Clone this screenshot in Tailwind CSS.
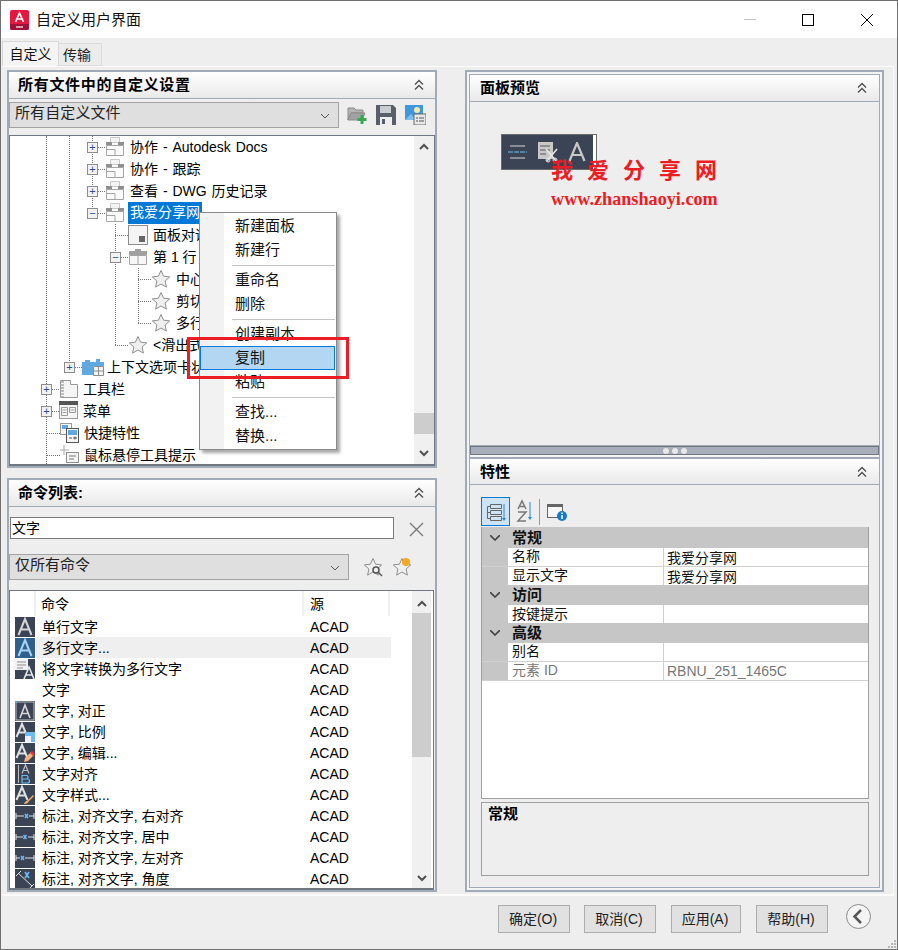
<!DOCTYPE html>
<html lang="zh-CN">
<head>
  <meta charset="UTF-8" />
  <title>自定义用户界面</title>
  <script src="https://cdn.jsdelivr.net/npm/@tailwindcss/browser@4"></script>
</head>
<body class="bg-[#eeeeee] text-black text-[14px] leading-[20px] font-[family-name:'Liberation_Sans','Noto_Sans_CJK_SC',sans-serif]">

  <!-- shared icons -->
  <svg class="hidden">
    <symbol id="panel" viewBox="0 0 20 22">
      <path d="M5.500 1.500h9v5h-9z" fill="#f4f4f4" stroke="#c8c8c8"/>
      <path d="M1 6h6v3H1zM13 6h6v3h-6z" fill="#909090"/>
      <path d="M1.500 9.500h17v10h-17z M10 13.500v6 M1.500 13.500h8.500" fill="#fbfbfb" stroke="#a4a4a4"/>
    </symbol>
    <symbol id="row" viewBox="0 0 20 20">
      <path d="M1 4h6v-2h6v2h6v4h-18z" fill="#a0a0a0"/>
      <path d="M1.500 8.500h17v9h-17z M10 8.500v9" fill="#f7f7f7" stroke="#a4a4a4"/>
    </symbol>
    <symbol id="star" viewBox="0 0 20 20">
      <path d="M10 1.500l2.600 5.700 6.100.7-4.600 4.100 1.300 6.100-5.400-3.100-5.400 3.100 1.300-6.100-4.600-4.100 6.100-.7z" fill="#efefef" stroke="#8f8f8f"/>
    </symbol>
    <symbol id="chev2" viewBox="0 0 12 12">
      <path d="M2 5.500l4-4 4 4M2 10.500l4-4 4 4" fill="none" stroke="#505050" stroke-width="1.400"/>
    </symbol>
    <symbol id="a" viewBox="0 0 20 20">
      <rect width="20" height="20" fill="#3b4455"/>
      <path d="M3.500 18L10 2l6.500 16M6 12.500h8" fill="none" stroke="#d6d6d6" stroke-width="2"/>
    </symbol>
    <symbol id="a-blue" viewBox="0 0 20 20">
      <rect width="20" height="20" fill="#2f5f8c"/>
      <path d="M3.500 18L10 2l6.500 16M6 12.500h8" fill="none" stroke="#a9d3f2" stroke-width="2"/>
    </symbol>
    <symbol id="a-conv" viewBox="0 0 20 20">
      <rect y="11" width="20" height="9" fill="#3b4455"/>
      <rect width="13" height="11" fill="#f2f2f2"/>
      <path d="M2 3h9M2 6h9M2 9h6" stroke="#8c8c8c"/>
      <rect x="13" width="7" height="11" fill="#3b4455"/>
      <path d="M9 20l5-12 5 12M11 16h6" fill="none" stroke="#e6e6e6" stroke-width="1.600"/>
    </symbol>
    <symbol id="a-just" viewBox="0 0 20 20">
      <rect width="20" height="20" fill="#3b4455"/>
      <rect x="1" y="1" width="18" height="18" fill="none" stroke="#bdbdbd"/>
      <path d="M5 17L10 4l5 13M7 12.500h6" fill="none" stroke="#d6d6d6" stroke-width="1.600"/>
      <rect width="2" height="2" fill="#5aa9e6"/>
    </symbol>
    <symbol id="a-scale" viewBox="0 0 20 20">
      <rect width="20" height="20" fill="#3b4455"/>
      <path d="M1.500 15L7 2l5.500 13M3.500 10.500h7" fill="none" stroke="#e0e0e0" stroke-width="2"/>
      <rect x="10" y="10" width="10" height="10" fill="#6cbcf5"/>
      <rect x="10" y="14" width="6" height="6" fill="#f0f0f0"/>
    </symbol>
    <symbol id="a-edit" viewBox="0 0 20 20">
      <rect width="20" height="20" fill="#3b4455"/>
      <path d="M1.500 15L7 2l5.500 13M3.500 10.500h7" fill="none" stroke="#e0e0e0" stroke-width="2"/>
      <path d="M9 19l1-4 6-6 3 3-6 6z" fill="#f5b183"/>
      <path d="M15 10l2-2 3 3-2 2z" fill="#e8343a"/>
    </symbol>
    <symbol id="a-align" viewBox="0 0 20 20">
      <rect width="20" height="20" fill="#3b4455"/>
      <path d="M3.500 1v18" stroke="#bdbdbd"/>
      <path d="M7 9.500L10.500 1 14 9.500M8.500 6.500h4" fill="none" stroke="#bdbdbd" stroke-width="1.200"/>
      <path d="M7 11.500h5a2 2 0 010 3.500h-5zM7 15h5.500a2 2 0 010 4H7z" fill="none" stroke="#6cbcf5" stroke-width="1.200"/>
    </symbol>
    <symbol id="a-style" viewBox="0 0 20 20">
      <rect width="20" height="20" fill="#3b4455"/>
      <path d="M1.500 15L7 2l5.500 13M3.500 10.500h7" fill="none" stroke="#e0e0e0" stroke-width="2"/>
      <path d="M9 19c1-3 3-3 4-4l5-5 1 1-5 5c-1 2-2 3-5 3z" fill="#f0b070"/>
    </symbol>
    <symbol id="dim-r" viewBox="0 0 20 20">
      <rect width="20" height="20" fill="#3b4455"/>
      <path d="M1 7v6M19 7v6M1 10h8M14 10h5" stroke="#e0e0e0"/>
      <path d="M10 8l3 4M13 8l-3 4" stroke="#6cbcf5" stroke-width="1.400"/>
    </symbol>
    <symbol id="dim-c" viewBox="0 0 20 20">
      <rect width="20" height="20" fill="#3b4455"/>
      <path d="M1 7v6M19 7v6M1 10h7M13 10h6" stroke="#e0e0e0"/>
      <path d="M8.500 8l3 4M11.500 8l-3 4" stroke="#6cbcf5" stroke-width="1.400"/>
    </symbol>
    <symbol id="dim-l" viewBox="0 0 20 20">
      <rect width="20" height="20" fill="#3b4455"/>
      <path d="M1 7v6M19 7v6M1 10h4M10 10h9" stroke="#e0e0e0"/>
      <path d="M6 8l3 4M9 8l-3 4" stroke="#6cbcf5" stroke-width="1.400"/>
    </symbol>
    <symbol id="dim-a" viewBox="0 0 20 20">
      <rect width="20" height="20" fill="#3b4455"/>
      <path d="M1 7l5-5M15 19l4-4M3 4l14 13" stroke="#e0e0e0"/>
      <path d="M10 3l4 6M14 3l-4 6" stroke="#6cbcf5" stroke-width="1.600"/>
    </symbol>
  </svg>

  <div class="h-[950px] flex flex-col border border-[#707070] overflow-hidden">

    <!-- title bar -->
    <div class="h-[37px] shrink-0 bg-white flex items-center">
      <svg class="ml-[9px] w-5 h-5" viewBox="0 0 20 20">
        <rect width="19" height="20" rx="2" fill="#e5173f"/>
        <path d="M0 14h19v4a2 2 0 01-2 2H2a2 2 0 01-2-2z" fill="#9c1137"/>
        <path d="M5.500 12L9.500 3l4 9M7 9h5" fill="none" stroke="#fff" stroke-width="1.700"/>
        <path d="M6 17h7" stroke="#f5c9d4" stroke-width="1.500"/>
      </svg>
      <div class="ml-[6px] text-[15px] text-[#111]">自定义用户界面</div>
      <div class="ml-auto flex items-center">
        <div class="w-[12px] h-px bg-[#c4c4c4] mr-[46px]"></div>
        <div class="w-[12px] h-[12px] border border-black mr-[47px]"></div>
        <svg class="w-[12px] h-[12px] mr-[24px]" viewBox="0 0 12 12"><path d="M0 0l12 12M12 0L0 12" stroke="#000"/></svg>
      </div>
    </div>

    <!-- tabs -->
    <div class="h-[28px] shrink-0 flex items-end pl-[1px] relative z-10">
      <div class="w-[57px] h-[25px] bg-[#f4f4f4] border border-b-0 border-[#d8d8d8] flex items-center justify-center text-[#111]">自定义</div>
      <div class="w-[43px] h-[23px] bg-[#ececec] border border-l-0 border-[#dcdcdc] flex items-center pl-[4px] text-[#222]">传输</div>
    </div>

    <!-- tab page -->
    <div class="h-[830px] shrink-0 mx-[1px] mr-[3px] border-t border-b-2 border-r border-[#fbfbfb] flex">

      <!-- left column -->
      <div class="w-[430px] ml-[5px] pt-[3px] flex flex-col gap-[10px] shrink-0">

        <!-- customizations in all files -->
        <div class="h-[398px] border-[2px] border-[#a0abb7] flex flex-col">
          <div class="h-[27px] shrink-0 bg-linear-to-b from-white to-[#e9e9e9] border-b border-[#a0abb7] flex items-center justify-between pl-[9px] pr-[10px]">
            <div class="font-bold text-[15px] tracking-[0.7px]">所有文件中的自定义设置</div>
            <svg class="w-3 h-3"><use href="#chev2"/></svg>
          </div>
          <div class="h-[36px] shrink-0 flex items-center pb-[4px]">
            <div class="w-[330px] h-[26px] bg-[#dfdfdf] border border-[#a3a3a3] flex items-start justify-between pl-[5px] pr-[8px] text-[15px] leading-[19px] text-[#222]">
              <span class="tracking-[0.1px]">所有自定义文件</span>
              <svg class="w-[10px] h-[6px] mt-[10px]" viewBox="0 0 10 6"><path d="M1 1l4 4 4-4" fill="none" stroke="#555"/></svg>
            </div>
            <svg class="ml-[8px] w-5 h-5" viewBox="0 0 20 20">
              <path d="M1 3h6l2 2h7v3H4L1 15z" fill="#b5b5b5" stroke="#8a8a8a"/>
              <path d="M4 8h14l-3 7H1z" fill="#a2a2a2" stroke="#8a8a8a"/>
              <path d="M15 10v9M10.500 14.500h9" stroke="#36a852" stroke-width="3"/>
            </svg>
            <svg class="ml-[9px] w-5 h-5" viewBox="0 0 20 20">
              <path d="M0 0h17l3 3v17H0z" fill="#585f69"/>
              <rect x="4" y="1" width="11" height="7" fill="#c9ccd0"/>
              <rect x="4" y="12" width="12" height="8" fill="#eeeeee"/>
              <rect x="6" y="14" width="3" height="5" fill="#585f69"/>
            </svg>
            <svg class="ml-[9px] w-[21px] h-5" viewBox="0 0 21 20">
              <rect width="18" height="15" fill="#3f97de"/>
              <circle cx="12" cy="5" r="3" fill="#f4e9a8"/>
              <path d="M0 15l6-6 5 6z" fill="#7cc0ef"/>
              <rect x="9" y="9" width="12" height="11" fill="#e8e8e8" stroke="#6a6a6a"/>
              <path d="M11 13h2M14 13h5M11 16h2M14 16h5" stroke="#555"/>
            </svg>
          </div>

          <!-- tree -->
          <div class="relative flex-1 min-h-0 bg-white border border-[#6e7782] border-b-2 overflow-hidden">
            <div class="absolute left-[36px] top-0 bottom-0 border-l border-dotted border-[#777]"></div>
            <div class="absolute left-[59px] top-0 h-[231px] border-l border-dotted border-[#777]"></div>
            <div class="absolute left-[82px] top-0 h-[77px] border-l border-dotted border-[#777]"></div>
            <div class="absolute left-[105px] top-[88px] h-[121px] border-l border-dotted border-[#777]"></div>
            <div class="absolute left-[128px] top-[132px] h-[55px] border-l border-dotted border-[#777]"></div>

            <div class="flex h-[22px] items-center pl-[77px]">
              <span class="w-[11px] h-[11px] bg-[#f2f2f2] border border-[#8d8d8d] flex items-center justify-center text-[#2b4f95] text-[11px] leading-none relative">+</span>
              <span class="w-[7px] border-t border-dotted border-[#777]"></span>
              <svg class="w-5 h-[22px]"><use href="#panel"/></svg>
              <span class="ml-[5px] [word-spacing:1px]">协作 - Autodesk Docs</span>
            </div>
            <div class="flex h-[22px] items-center pl-[77px]">
              <span class="w-[11px] h-[11px] bg-[#f2f2f2] border border-[#8d8d8d] flex items-center justify-center text-[#2b4f95] text-[11px] leading-none relative">+</span>
              <span class="w-[7px] border-t border-dotted border-[#777]"></span>
              <svg class="w-5 h-[22px]"><use href="#panel"/></svg>
              <span class="ml-[5px] [word-spacing:1px]">协作 - 跟踪</span>
            </div>
            <div class="flex h-[22px] items-center pl-[77px]">
              <span class="w-[11px] h-[11px] bg-[#f2f2f2] border border-[#8d8d8d] flex items-center justify-center text-[#2b4f95] text-[11px] leading-none relative">+</span>
              <span class="w-[7px] border-t border-dotted border-[#777]"></span>
              <svg class="w-5 h-[22px]"><use href="#panel"/></svg>
              <span class="ml-[5px] [word-spacing:1px]">查看 - DWG 历史记录</span>
            </div>
            <div class="flex h-[22px] items-center pl-[77px]">
              <span class="w-[11px] h-[11px] bg-[#f2f2f2] border border-[#8d8d8d] flex items-center justify-center text-[#2b4f95] text-[11px] leading-none relative">−</span>
              <span class="w-[7px] border-t border-dotted border-[#777]"></span>
              <svg class="w-5 h-[22px]"><use href="#panel"/></svg>
              <span class="ml-[3px] px-[2px] h-[22px] bg-[#0078d7] text-white">我爱分享网</span>
            </div>
            <div class="flex h-[22px] items-center pl-[105px]">
              <span class="w-[13px] border-t border-dotted border-[#777]"></span>
              <span class="w-5 h-5 bg-[#f4f4f4] border border-[#8d8d8d] flex items-end justify-end"><span class="w-[6px] h-[6px] mb-[2px] mr-[2px] bg-[#666]"></span></span>
              <span class="ml-[5px]">面板对话框</span>
            </div>
            <div class="flex h-[22px] items-center pl-[100px]">
              <span class="w-[11px] h-[11px] bg-[#f2f2f2] border border-[#8d8d8d] flex items-center justify-center text-[#2b4f95] text-[11px] leading-none relative">−</span>
              <span class="w-[7px] border-t border-dotted border-[#777]"></span>
              <svg class="w-5 h-5"><use href="#row"/></svg>
              <span class="ml-[5px]">第 1 行</span>
            </div>
            <div class="flex h-[22px] items-center pl-[128px]">
              <span class="w-[13px] border-t border-dotted border-[#777]"></span>
              <svg class="w-5 h-5"><use href="#star"/></svg>
              <span class="ml-[5px]">中心线</span>
            </div>
            <div class="flex h-[22px] items-center pl-[128px]">
              <span class="w-[13px] border-t border-dotted border-[#777]"></span>
              <svg class="w-5 h-5"><use href="#star"/></svg>
              <span class="ml-[5px]">剪切</span>
            </div>
            <div class="flex h-[22px] items-center pl-[128px]">
              <span class="w-[13px] border-t border-dotted border-[#777]"></span>
              <svg class="w-5 h-5"><use href="#star"/></svg>
              <span class="ml-[5px]">多行文字</span>
            </div>
            <div class="flex h-[22px] items-center pl-[105px]">
              <span class="w-[13px] border-t border-dotted border-[#777]"></span>
              <svg class="w-5 h-5"><use href="#star"/></svg>
              <span class="ml-[5px]">&lt;滑出式面板&gt;</span>
            </div>
            <div class="flex h-[22px] items-center pl-[54px]">
              <span class="w-[11px] h-[11px] bg-[#f2f2f2] border border-[#8d8d8d] flex items-center justify-center text-[#2b4f95] text-[11px] leading-none relative">+</span>
              <span class="w-[7px] border-t border-dotted border-[#777]"></span>
              <svg class="w-[22px] h-5" viewBox="0 0 22 20">
                <path d="M0 5h3V3h5v2h3v13H0z" fill="#5fa8e0"/>
                <path d="M11 5h3V2h4v3h4v4H11z" fill="#5fa8e0"/>
                <path d="M11.500 9.500h10v9h-10zM16.500 9.500v9M11.500 14h10" fill="#f4f4f4" stroke="#8d8d8d"/>
              </svg>
              <span class="ml-[3px]">上下文选项卡状态</span>
            </div>
            <div class="flex h-[22px] items-center pl-[31px]">
              <span class="w-[11px] h-[11px] bg-[#f2f2f2] border border-[#8d8d8d] flex items-center justify-center text-[#2b4f95] text-[11px] leading-none relative">+</span>
              <span class="w-[7px] border-t border-dotted border-[#777]"></span>
              <svg class="w-[19px] h-5" viewBox="0 0 19 20">
                <path d="M1.500 1.500h10v4h7v13H1.500z" fill="#f5f5f5" stroke="#9a9a9a"/>
                <path d="M3.500 2v16" stroke="#bdbdbd" stroke-width="3" stroke-dasharray="2 1"/>
              </svg>
              <span class="ml-[5px]">工具栏</span>
            </div>
            <div class="flex h-[22px] items-center pl-[31px]">
              <span class="w-[11px] h-[11px] bg-[#f2f2f2] border border-[#8d8d8d] flex items-center justify-center text-[#2b4f95] text-[11px] leading-none relative">+</span>
              <span class="w-[7px] border-t border-dotted border-[#777]"></span>
              <svg class="w-[19px] h-5" viewBox="0 0 19 20">
                <rect x="0.500" y="0.500" width="18" height="17" fill="#f5f5f5" stroke="#9a9a9a"/>
                <rect width="19" height="4" fill="#555"/>
                <path d="M2.500 6.500h6v8h-6zM10.500 6.500h6v5h-6zM3.500 9h4M3.500 11.500h4M11.500 9h4" fill="none" stroke="#9a9a9a"/>
              </svg>
              <span class="ml-[5px]">菜单</span>
            </div>
            <div class="flex h-[22px] items-center pl-[37px]">
              <span class="w-[13px] border-t border-dotted border-[#777]"></span>
              <svg class="w-[19px] h-5" viewBox="0 0 19 20">
                <rect x="0.500" y="0.500" width="11" height="11" fill="#f5f5f5" stroke="#9a9a9a"/>
                <rect x="2" y="2" width="6" height="4" fill="#5fa8e0"/>
                <rect x="6.500" y="5.500" width="12" height="14" fill="#f5f5f5" stroke="#555"/>
                <rect x="8" y="7" width="9" height="5" fill="#5fa8e0"/>
                <path d="M9 15h3M13 15h4M15 13.500v3" stroke="#555"/>
              </svg>
              <span class="ml-[5px]">快捷特性</span>
            </div>
            <div class="flex h-[22px] items-center pl-[37px]">
              <span class="w-[13px] border-t border-dotted border-[#777]"></span>
              <svg class="w-[19px] h-5" viewBox="0 0 19 20">
                <path d="M4 0v10M0 5h9" stroke="#aaa"/>
                <rect x="6.500" y="7.500" width="12" height="10" fill="#f5f5f5" stroke="#8d8d8d"/>
                <path d="M9 11h7M9 14h5" stroke="#777"/>
              </svg>
              <span class="ml-[5px]">鼠标悬停工具提示</span>
            </div>

            <!-- tree scrollbar -->
            <div class="absolute right-0 top-0 bottom-0 w-[20px] bg-[#f0f0f0] flex flex-col items-center">
              <svg class="w-[10px] h-[7px] mt-[7px]" viewBox="0 0 10 7"><path d="M1 6l4-4 4 4" fill="none" stroke="#505050" stroke-width="2"/></svg>
              <div class="w-full h-[21px] mt-[263px] bg-[#cdcdcd]"></div>
              <svg class="w-[10px] h-[7px] mt-[16px]" viewBox="0 0 10 7"><path d="M1 1l4 4 4-4" fill="none" stroke="#505050" stroke-width="2"/></svg>
            </div>
          </div>
        </div>

        <!-- command list -->
        <div class="h-[414px] border-[2px] border-[#a0abb7] flex flex-col">
          <div class="h-[27px] shrink-0 bg-linear-to-b from-white to-[#e9e9e9] border-b border-[#a0abb7] flex items-center justify-between pl-[9px] pr-[10px]">
            <div class="font-bold text-[15px]">命令列表:</div>
            <svg class="w-3 h-3"><use href="#chev2"/></svg>
          </div>
          <div class="h-[32px] shrink-0 flex items-end">
            <div class="ml-[1px] w-[384px] h-[22px] bg-white border border-[#7a7a7a] pl-[1px] leading-[20px]">文字</div>
            <svg class="ml-[15px] mb-[2px] w-[15px] h-[15px]" viewBox="0 0 15 15"><path d="M1 1l13 13M14 1L1 14" stroke="#777" stroke-width="1.300"/></svg>
          </div>
          <div class="h-[36px] shrink-0 flex items-center mt-[10px] mb-[5px]">
            <div class="w-[340px] h-[26px] bg-[#dfdfdf] border border-[#a3a3a3] flex items-start justify-between pl-[5px] pr-[8px] text-[15px] leading-[19px] text-[#222]">
              <span>仅所有命令</span>
              <svg class="w-[10px] h-[6px] mt-[10px]" viewBox="0 0 10 6"><path d="M1 1l4 4 4-4" fill="none" stroke="#555"/></svg>
            </div>
            <svg class="ml-[14px] w-5 h-5" viewBox="0 0 20 20">
              <path d="M10 1.500l2.600 5.700 6.100.7-4.600 4.100 1.300 6.100-5.400-3.100-5.400 3.100 1.300-6.100-4.600-4.100 6.100-.7z" fill="#efefef" stroke="#8f8f8f"/>
              <circle cx="13" cy="13" r="3" fill="#efefef" stroke="#555" stroke-width="1.500"/>
              <path d="M15 15l4 4" stroke="#555" stroke-width="1.500"/>
            </svg>
            <svg class="ml-[9px] w-5 h-5" viewBox="0 0 20 20">
              <path d="M10 1.500l2.600 5.700 6.100.7-4.600 4.100 1.300 6.100-5.400-3.100-5.400 3.100 1.300-6.100-4.600-4.100 6.100-.7z" fill="#efefef" stroke="#8f8f8f"/>
              <circle cx="14" cy="5" r="4" fill="#f6a821"/>
            </svg>
          </div>

          <!-- command table -->
          <div class="relative flex-1 min-h-0 mr-[1px] bg-white border border-[#6e7782] border-b-2 overflow-hidden">
            <div class="h-[25px] flex leading-[26px]">
              <div class="w-[26px] border-r-2 border-[#f0f0f0] h-[25px]"></div>
              <div class="w-[268px] pl-[5px] border-r-2 border-[#f0f0f0] h-[25px]">命令</div>
              <div class="w-[86px] pl-[6px] border-r-2 border-[#f0f0f0] h-[25px]">源</div>
            </div>
            <div class="w-[381px] h-[21px] flex items-center"><svg class="ml-[5px] w-5 h-5"><use href="#a"/></svg><span class="ml-[7px] w-[268px]">单行文字</span><span>ACAD</span></div>
            <div class="w-[381px] h-[21px] flex items-center bg-linear-to-r from-white from-[26px] to-[#efefef] to-[26px]"><svg class="ml-[5px] w-5 h-5"><use href="#a-blue"/></svg><span class="ml-[7px] w-[268px]">多行文字...</span><span>ACAD</span></div>
            <div class="w-[381px] h-[21px] flex items-center"><svg class="ml-[5px] w-5 h-5"><use href="#a-conv"/></svg><span class="ml-[7px] w-[268px]">将文字转换为多行文字</span><span>ACAD</span></div>
            <div class="w-[381px] h-[21px] flex items-center"><span class="ml-[32px] w-[268px]">文字</span><span>ACAD</span></div>
            <div class="w-[381px] h-[21px] flex items-center"><svg class="ml-[5px] w-5 h-5"><use href="#a-just"/></svg><span class="ml-[7px] w-[268px]">文字, 对正</span><span>ACAD</span></div>
            <div class="w-[381px] h-[21px] flex items-center"><svg class="ml-[5px] w-5 h-5"><use href="#a-scale"/></svg><span class="ml-[7px] w-[268px]">文字, 比例</span><span>ACAD</span></div>
            <div class="w-[381px] h-[21px] flex items-center"><svg class="ml-[5px] w-5 h-5"><use href="#a-edit"/></svg><span class="ml-[7px] w-[268px]">文字, 编辑...</span><span>ACAD</span></div>
            <div class="w-[381px] h-[21px] flex items-center"><svg class="ml-[5px] w-5 h-5"><use href="#a-align"/></svg><span class="ml-[7px] w-[268px]">文字对齐</span><span>ACAD</span></div>
            <div class="w-[381px] h-[21px] flex items-center"><svg class="ml-[5px] w-5 h-5"><use href="#a-style"/></svg><span class="ml-[7px] w-[268px]">文字样式...</span><span>ACAD</span></div>
            <div class="w-[381px] h-[21px] flex items-center"><svg class="ml-[5px] w-5 h-5"><use href="#dim-r"/></svg><span class="ml-[7px] w-[268px]">标注, 对齐文字, 右对齐</span><span>ACAD</span></div>
            <div class="w-[381px] h-[21px] flex items-center"><svg class="ml-[5px] w-5 h-5"><use href="#dim-c"/></svg><span class="ml-[7px] w-[268px]">标注, 对齐文字, 居中</span><span>ACAD</span></div>
            <div class="w-[381px] h-[21px] flex items-center"><svg class="ml-[5px] w-5 h-5"><use href="#dim-l"/></svg><span class="ml-[7px] w-[268px]">标注, 对齐文字, 左对齐</span><span>ACAD</span></div>
            <div class="w-[381px] h-[21px] flex items-center"><svg class="ml-[5px] w-5 h-5"><use href="#dim-a"/></svg><span class="ml-[7px] w-[268px]">标注, 对齐文字, 角度</span><span>ACAD</span></div>

            <!-- list scrollbar -->
            <div class="absolute right-[2px] top-0 bottom-0 w-[19px] bg-[#f0f0f0] flex flex-col items-center">
              <svg class="w-[10px] h-[7px] mt-[9px]" viewBox="0 0 10 7"><path d="M1 6l4-4 4 4" fill="none" stroke="#505050" stroke-width="2"/></svg>
              <div class="w-full h-[144px] mt-[6px] bg-[#cdcdcd]"></div>
              <svg class="w-[10px] h-[7px] mt-[118px]" viewBox="0 0 10 7"><path d="M1 1l4 4 4-4" fill="none" stroke="#505050" stroke-width="2"/></svg>
            </div>
          </div>
        </div>
      </div>

      <!-- right column -->
      <div class="w-[419px] h-[822px] ml-[28px] mt-[3px] shrink-0 border-[2px] border-[#a0abb7] bg-[#f4f4f4] p-[2px] flex flex-col">
        <div class="flex-1 min-h-0 border border-[#a0abb7] flex flex-col">

          <!-- panel preview -->
          <div class="h-[371px] shrink-0 flex flex-col relative">
            <div class="h-[27px] shrink-0 bg-linear-to-b from-white to-[#e9e9e9] border-b border-[#a0abb7] flex items-center justify-between pl-[10px] pr-[11px]">
              <div class="font-bold text-[15px]">面板预览</div>
              <svg class="w-3 h-3"><use href="#chev2"/></svg>
            </div>
            <div class="flex-1 bg-[#eeeeee] border-b border-[#a0abb7] pl-[31px] pt-[32px]">
              <div class="w-[96px] h-[36px] border border-[#6a6a6a] bg-[#3b4455] flex items-center">
                <svg class="ml-[5px] w-5 h-5" viewBox="0 0 20 20">
                  <path d="M3 4h15M3 16h15" stroke="#d8d8d8"/>
                  <path d="M1 10h19" stroke="#6cbcf5" stroke-dasharray="5 1"/>
                </svg>
                <svg class="ml-[10px] w-[22px] h-[22px]" viewBox="0 0 22 22">
                  <rect x="1" y="1" width="15" height="17" fill="#c8c8c8"/>
                  <path d="M3 5h10M3 9h10M3 13h6" stroke="#555"/>
                  <path d="M9 8l10 12M20 8L10 20" stroke="#e8e8e8" stroke-width="1.500"/>
                  <circle cx="11" cy="19" r="2" fill="none" stroke="#e8e8e8"/>
                  <circle cx="18" cy="19" r="2" fill="none" stroke="#e8e8e8"/>
                </svg>
                <svg class="ml-[9px] w-[18px] h-[20px]" viewBox="0 0 18 20"><path d="M1.500 19L9 1l7.500 18M4 13h10" fill="none" stroke="#c8c8c8" stroke-width="2.200"/></svg>
                <div class="ml-auto w-[3px] h-full bg-white"></div>
              </div>
            </div>
            <!-- watermark over the preview -->
            <div class="absolute left-[81px] top-[80px] w-[170px] text-[#ed1c24] font-bold">
              <div class="text-[22px] leading-[26px] whitespace-nowrap tracking-[14px] font-[family-name:'Noto_Sans_CJK_SC',sans-serif]">我爱分享网</div>
              <div class="text-[18.200px] leading-[20px] mt-[8px] whitespace-nowrap font-[family-name:'Liberation_Serif',serif]">www.zhanshaoyi.com</div>
            </div>
          </div>

          <!-- splitter -->
          <div class="h-[9px] shrink-0 bg-[#a7aeb9] border border-[#6e7782] flex items-center justify-center gap-[3px]">
            <span class="w-[6px] h-[6px] rounded-full bg-[#e8e8e8]"></span>
            <span class="w-[6px] h-[6px] rounded-full bg-[#e8e8e8]"></span>
            <span class="w-[6px] h-[6px] rounded-full bg-[#e8e8e8]"></span>
          </div>

          <!-- properties -->
          <div class="flex-1 min-h-0 mt-[2px] flex flex-col">
            <div class="h-[28px] shrink-0 border-t-2 border-[#a0abb7] bg-linear-to-b from-white to-[#e9e9e9] border-b border-b-[#a0abb7] flex items-center justify-between pl-[10px] pr-[11px]">
              <div class="font-bold text-[15px]">特性</div>
              <svg class="w-3 h-3"><use href="#chev2"/></svg>
            </div>
            <div class="flex-1 min-h-0 bg-[#eeeeee] pl-[11px] pr-[10px] flex flex-col">
              <div class="h-[41px] shrink-0 flex items-end">
                <div class="w-[29px] h-[29px] bg-[#cde4f7] border border-[#0078d7] flex items-center justify-center">
                  <svg class="w-5 h-5" viewBox="0 0 20 20">
                    <path d="M4.500 2.500h11v4h-11zM4.500 8.500h11v4h-11zM4.500 14.500h11v4h-11zM4.500 4.500h-3v12h3M1.500 10.500h3" fill="none" stroke="#666"/>
                    <path d="M18 2v15" stroke="#2b86d9"/>
                    <path d="M16 16h4l-2 3z" fill="#2b86d9"/>
                  </svg>
                </div>
                <svg class="ml-[6px] mb-[3px] w-5 h-[24px]" viewBox="0 0 20 24">
                  <path d="M2 10l4-8 4 8M3.500 7.500h5M2 13h8l-8 9h8" fill="none" stroke="#777" stroke-width="1.500"/>
                  <path d="M14 3v16" stroke="#2b86d9"/>
                  <path d="M12 18h4l-2 3z" fill="#2b86d9"/>
                </svg>
                <div class="ml-[3px] mb-[1px] w-px h-[26px] bg-[#9a9a9a]"></div>
                <svg class="ml-[7px] mb-[3px] w-[21px] h-[22px]" viewBox="0 0 21 22">
                  <rect x="0.500" y="3.500" width="15" height="13" fill="#f7f7f7" stroke="#666"/>
                  <rect y="3" width="16" height="3" fill="#666"/>
                  <circle cx="15" cy="15" r="5" fill="#1679c9"/>
                  <path d="M15 14v4M15 11.500v1.500" stroke="#fff" stroke-width="1.500"/>
                </svg>
              </div>
              <div class="h-[272px] mt-[1px] shrink-0 bg-white border border-[#a0a0a0] border-t-0 text-[#111]">
                <div class="h-[21px] bg-[#c6c6c6] flex items-center font-bold text-[15px]">
                  <svg class="ml-[8px] w-[10px] h-[6px]" viewBox="0 0 10 6"><path d="M0 0l5 5 5-5" fill="none" stroke="#444" stroke-width="1.600"/></svg>
                  <span class="ml-[12px]">常规</span>
                </div>
                <div class="flex h-[19px] border-b border-[#d0d0d0]">
                  <div class="w-[26px] bg-[#c6c6c6]"></div>
                  <div class="w-[156px] pl-[4px] border-r border-[#d0d0d0] leading-[17px]">名称</div>
                  <div class="pl-[3px] leading-[20px]">我爱分享网</div>
                </div>
                <div class="flex h-[18px]">
                  <div class="w-[26px] bg-[#c6c6c6]"></div>
                  <div class="w-[156px] pl-[4px] border-r border-[#d0d0d0] leading-[17px]">显示文字</div>
                  <div class="pl-[3px] leading-[20px]">我爱分享网</div>
                </div>
                <div class="h-[20px] bg-[#c6c6c6] flex items-center font-bold text-[15px]">
                  <svg class="ml-[8px] w-[10px] h-[6px]" viewBox="0 0 10 6"><path d="M0 0l5 5 5-5" fill="none" stroke="#444" stroke-width="1.600"/></svg>
                  <span class="ml-[12px]">访问</span>
                </div>
                <div class="flex h-[18px]">
                  <div class="w-[26px] bg-[#c6c6c6]"></div>
                  <div class="w-[156px] pl-[4px] border-r border-[#d0d0d0] leading-[18px]">按键提示</div>
                </div>
                <div class="h-[20px] bg-[#c6c6c6] flex items-center font-bold text-[15px]">
                  <svg class="ml-[8px] w-[10px] h-[6px]" viewBox="0 0 10 6"><path d="M0 0l5 5 5-5" fill="none" stroke="#444" stroke-width="1.600"/></svg>
                  <span class="ml-[12px]">高级</span>
                </div>
                <div class="flex h-[19px] border-b border-[#d0d0d0]">
                  <div class="w-[26px] bg-[#c6c6c6]"></div>
                  <div class="w-[156px] pl-[4px] border-r border-[#d0d0d0] leading-[17px]">别名</div>
                </div>
                <div class="flex h-[19px] border-b border-[#d0d0d0] text-[#777]">
                  <div class="w-[26px] bg-[#c6c6c6]"></div>
                  <div class="w-[156px] pl-[4px] border-r border-[#d0d0d0] leading-[17px]">元素 ID</div>
                  <div class="pl-[3px] leading-[19px]">RBNU_251_1465C</div>
                </div>
              </div>
              <div class="h-[74px] shrink-0 mt-[3px] border border-[#a0a0a0] pt-[1px] pl-[6px] font-bold text-[15px]">常规</div>
            </div>
          </div>
        </div>
      </div>
    </div>

    <!-- dialog buttons -->
    <div class="flex-1 min-h-0 flex items-start relative pt-[9px] pl-[497px] text-[#222]">
      <div class="w-[72px] h-[28px] bg-[#e1e1e1] border border-[#adadad] flex items-center justify-center pr-[2px]">确定(O)</div>
      <div class="ml-[14px] w-[72px] h-[28px] bg-[#e1e1e1] border border-[#adadad] flex items-center justify-center pr-[2px]">取消(C)</div>
      <div class="ml-[15px] w-[70px] h-[28px] bg-[#e1e1e1] border border-[#adadad] flex items-center justify-center pr-[2px]">应用(A)</div>
      <div class="ml-[15px] w-[72px] h-[28px] bg-[#e1e1e1] border border-[#adadad] flex items-center justify-center pr-[2px]">帮助(H)</div>
      <svg class="ml-[18px] w-[25px] h-[25px] -mt-[1px]" viewBox="0 0 25 25">
        <circle cx="12.500" cy="12.500" r="12" fill="#f4f4f4" stroke="#8a8a8a"/>
        <path d="M15 6l-6.500 6.500L15 19" fill="none" stroke="#555" stroke-width="2.500"/>
      </svg>
      <svg class="absolute right-0 bottom-0 w-[10px] h-[10px]" viewBox="0 0 10 10"><path d="M7 1h2v2H7zM4 4h2v2H4zM7 4h2v2H7zM1 7h2v2H1zM4 7h2v2H4zM7 7h2v2H7z" fill="#b5b5b5"/></svg>
    </div>
  </div>

  <!-- context menu -->
  <div class="absolute left-[199px] top-[212px] w-[138px] h-[238px] bg-white border border-[#8a8a8a] shadow-[3px_3px_3px_rgba(0,0,0,0.35)] py-[1px] pr-[1px] text-[15px] text-[#111]">
    <div class="absolute left-0 top-0 bottom-0 w-[24px] bg-[#f2f2f2]"></div>
    <div class="relative h-[24px] pl-[35px] leading-[24px]">新建面板</div>
    <div class="relative h-[24px] pl-[35px] leading-[24px]">新建行</div>
    <div class="relative h-[6px] flex items-center ml-[32px]"><div class="w-full h-px bg-[#c4c4c4]"></div></div>
    <div class="relative h-[24px] pl-[35px] leading-[24px]">重命名</div>
    <div class="relative h-[24px] pl-[35px] leading-[24px]">删除</div>
    <div class="relative h-[6px] flex items-center ml-[32px]"><div class="w-full h-px bg-[#c4c4c4]"></div></div>
    <div class="relative h-[24px] pl-[35px] leading-[24px]">创建副本</div>
    <div class="relative h-[24px] pl-[34px] leading-[22px] bg-[#b3d7f3] border border-[#0078d7]">复制</div>
    <div class="relative h-[24px] pl-[35px] leading-[24px]">粘贴</div>
    <div class="relative h-[6px] flex items-center ml-[32px]"><div class="w-full h-px bg-[#c4c4c4]"></div></div>
    <div class="relative h-[24px] pl-[35px] leading-[24px]">查找...</div>
    <div class="relative h-[24px] pl-[35px] leading-[24px]">替换...</div>
  </div>

  <!-- red annotation box over the menu -->
  <div class="absolute left-[187px] top-[337px] w-[162px] h-[42px] border-[3px] border-[#ed1c24] pointer-events-none"></div>
</body>
</html>
